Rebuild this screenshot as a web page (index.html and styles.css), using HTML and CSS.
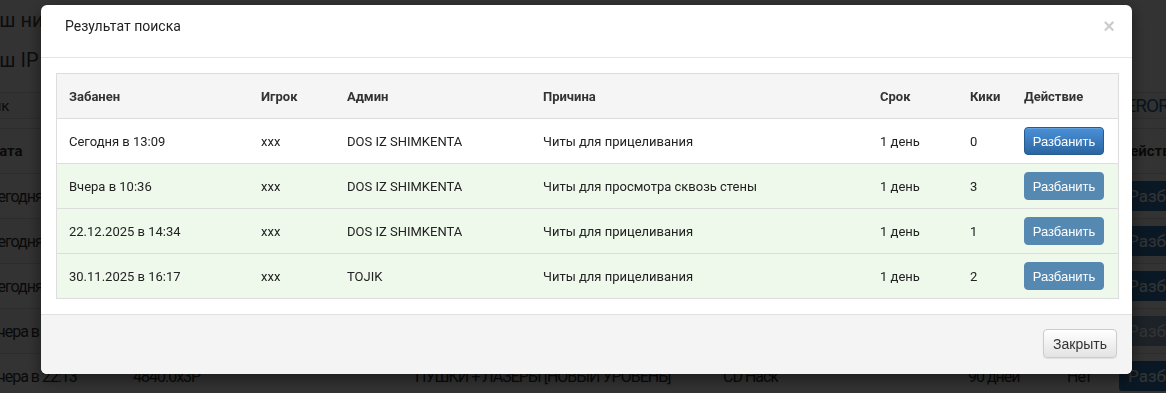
FILE: index.html
```html
<!DOCTYPE html>
<html lang="ru">
<head>
<meta charset="utf-8">
<title>Результат поиска</title>
<link rel="stylesheet" href="styles.css">
</head>
<body>
<div class="page">
  <div class="info">Ваш ник: <b>User</b></div>
  <div class="info">Ваш IP <span class="ip">5.76.118.20</span></div>
  <div class="toolbar"><span class="tb-label">Ник</span><span class="tb-nick">ZEROR</span></div>
  <table class="bans">
    <thead>
      <tr><th class="b1">Дата</th><th class="b2">Ник</th><th class="b3">Причина</th><th class="b4">Админ</th><th class="b5">Срок</th><th class="b6">Кики</th><th class="b7">Действие</th></tr>
    </thead>
    <tbody>
      <tr><td>Сегодня в 13:09</td><td>xxx</td><td>Читы для прицеливания</td><td>DOS IZ SHIMKENTA</td><td>1 день</td><td>0</td><td><span class="pbtn">Разбанить</span></td></tr>
      <tr class="odd"><td>Сегодня в 11:02</td><td>Player</td><td>Читы</td><td>Admin</td><td>1 день</td><td>Нет</td><td><span class="pbtn">Разбанить</span></td></tr>
      <tr><td>Сегодня в 09:47</td><td>Player</td><td>Читы</td><td>Admin</td><td>7 дней</td><td>Нет</td><td><span class="pbtn">Разбанить</span></td></tr>
      <tr class="odd"><td>Вчера в 23:40</td><td>Player</td><td>Читы</td><td>Admin</td><td>30 дней</td><td>Нет</td><td><span class="pbtn pbtn-dim">Разбанить</span></td></tr>
      <tr><td>Вчера в 22:13</td><td>4840.0x3P</td><td>ПУШКИ + ЛАЗЕРЫ [НОВЫЙ УРОВЕНЬ]</td><td>CD Hack</td><td>90 дней</td><td>Нет</td><td><span class="pbtn">Разбанить</span></td></tr>
    </tbody>
  </table>
</div>

<div class="backdrop"></div>

<div class="modal">
  <div class="modal-header">
    <h4 class="modal-title">Результат поиска</h4>
    <span class="close">×</span>
  </div>
  <div class="modal-body">
    <table class="result">
      <thead>
        <tr>
          <th class="c-date">Забанен</th>
          <th class="c-player">Игрок</th>
          <th class="c-admin">Админ</th>
          <th class="c-reason">Причина</th>
          <th class="c-term">Срок</th>
          <th class="c-kicks">Кики</th>
          <th class="c-action">Действие</th>
        </tr>
      </thead>
      <tbody>
        <tr>
          <td>Сегодня в 13:09</td><td>xxx</td><td>DOS IZ SHIMKENTA</td><td>Читы для прицеливания</td><td>1 день</td><td>0</td>
          <td><button class="btn btn-primary">Разбанить</button></td>
        </tr>
        <tr class="success">
          <td>Вчера в 10:36</td><td>xxx</td><td>DOS IZ SHIMKENTA</td><td>Читы для просмотра сквозь стены</td><td>1 день</td><td>3</td>
          <td><button class="btn btn-primary disabled">Разбанить</button></td>
        </tr>
        <tr class="success">
          <td>22.12.2025 в 14:34</td><td>xxx</td><td>DOS IZ SHIMKENTA</td><td>Читы для прицеливания</td><td>1 день</td><td>1</td>
          <td><button class="btn btn-primary disabled">Разбанить</button></td>
        </tr>
        <tr class="success">
          <td>30.11.2025 в 16:17</td><td>xxx</td><td>TOJIK</td><td>Читы для прицеливания</td><td>1 день</td><td>2</td>
          <td><button class="btn btn-primary disabled">Разбанить</button></td>
        </tr>
      </tbody>
    </table>
  </div>
  <div class="modal-footer">
    <button class="btn btn-default">Закрыть</button>
  </div>
</div>
</body>
</html>
```
FILE: styles.css
```css
html, body {
  margin: 0;
  padding: 0;
  background: #ffffff;
  overflow: hidden;
}

body {
  width: 1166px;
  height: 393px;
  font-family: Roboto, "Noto Sans", sans-serif;
  color: #333;
}

/* ---------- background page ---------- */
.page {
  margin-left: -24px;
  width: 1260px;
}

.info {
  height: 40px;
  line-height: 40px;
  padding-left: 0;
  font-size: 20px;
  color: #444;
}

.info b {
  font-weight: 400;
}

.ip {
  color: #ffa000;
}

.toolbar {
  margin-top: 12px;
  height: 25px;
  border-top: 1px solid #ddd;
  border-bottom: 1px solid #ddd;
  background: #fafafa;
  display: flex;
  align-items: center;
  padding-left: 12px;
  font-size: 15px;
}

.tb-label {
  flex: 0 0 1133px;
  margin-left: -6px;
}

.tb-nick {
  color: #2a6496;
  font-size: 19px;
  letter-spacing: -1px;
}

.bans {
  margin-top: 9px;
  border-collapse: collapse;
  table-layout: fixed;
  width: 1260px;
  font-size: 16px;
  letter-spacing: -1px;
  color: #333;
}

.bans th,
.bans td {
  height: 44px;
  padding: 0 12px;
  text-align: left;
  border-top: 1px solid #ddd;
  white-space: nowrap;
  overflow: hidden;
}

.bans th {
  font-weight: 700;
  font-size: 15px;
  letter-spacing: 0;
}

.bans .odd td {
  background: #f7f7f7;
}

.b1 { width: 121px; }
.b2 { width: 258px; }
.b3 { width: 284px; }
.b4 { width: 221px; }
.b5 { width: 75px; }
.b6 { width: 28px; }
.b7 { width: 105px; }

.pbtn {
  display: inline-block;
  background: #337ab7;
  color: #fff;
  padding: 5px 9px;
  border-radius: 3px;
  font-size: 17px;
  letter-spacing: 0;
}

.pbtn-dim {
  background: #8aa9c4;
}

/* ---------- overlay ---------- */
.backdrop {
  position: fixed;
  inset: 0;
  background: rgba(0, 0, 0, 0.8);
}

.modal {
  position: fixed;
  top: 5px;
  left: 41px;
  width: 1091px;
  background: #fff;
  border-radius: 6px;
  box-shadow: 0 5px 15px rgba(0, 0, 0, 0.5);
  overflow: hidden;
  color: #222;
}

.modal-header {
  box-sizing: border-box;
  height: 53px;
  display: flex;
  justify-content: space-between;
  align-items: flex-start;
  padding: 11px 17px 0 24px;
  border-bottom: 1px solid #e5e5e5;
}

.modal-title {
  margin: 0;
  font-size: 14px;
  line-height: 21px;
  font-weight: 400;
  color: #222;
}

.close {
  font-family: "Liberation Sans", Arial, sans-serif;
  font-size: 20px;
  font-weight: 700;
  line-height: 20px;
  margin-top: 0;
  color: #000;
  opacity: 0.2;
}

.modal-body {
  padding: 15px;
}

.result {
  width: 100%;
  border-collapse: collapse;
  table-layout: fixed;
  border: 1px solid #ddd;
  font-size: 13px;
}

.result th,
.result td {
  height: 44px;
  padding: 0 12px;
  text-align: left;
  vertical-align: middle;
  border-top: 1px solid #ddd;
  white-space: nowrap;
}

.result thead th {
  background: #f5f5f5;
  font-weight: 700;
  color: #333;
}

.result tr.success td {
  background: #eef8eb;
}

.c-date { width: 168px; }
.c-player { width: 62px; }
.c-admin { width: 172px; }
.c-reason { width: 313px; }
.c-term { width: 66px; }
.c-kicks { width: 30px; }
.c-action { width: 82px; }

.btn {
  display: inline-block;
  box-sizing: border-box;
  border-radius: 4px;
  cursor: pointer;
  font-family: "Liberation Sans", Arial, sans-serif;
}

.btn-primary {
  width: 80px;
  height: 28px;
  padding: 0;
  font-size: 13px;
  color: #fff;
  border: 1px solid #245c90;
  background: linear-gradient(#4a91d8, #2b65a1);
  box-shadow: inset 0 1px 0 rgba(255, 255, 255, 0.15);
}

.btn-primary.disabled {
  border-color: #5689b1;
  background: #5689b1;
  box-shadow: none;
}

.modal-footer {
  display: flex;
  justify-content: flex-end;
  padding: 14px 15px 16px;
  border-top: 1px solid #e0e0e0;
  background: #f4f4f4;
}

.btn-default {
  width: 74px;
  height: 29px;
  padding: 0;
  font-size: 14px;
  color: #333;
  border: 1px solid #ccc;
  background: linear-gradient(#ffffff, #e3e3e3);
  box-shadow: 0 1px 1px rgba(0, 0, 0, 0.08);
}
```
